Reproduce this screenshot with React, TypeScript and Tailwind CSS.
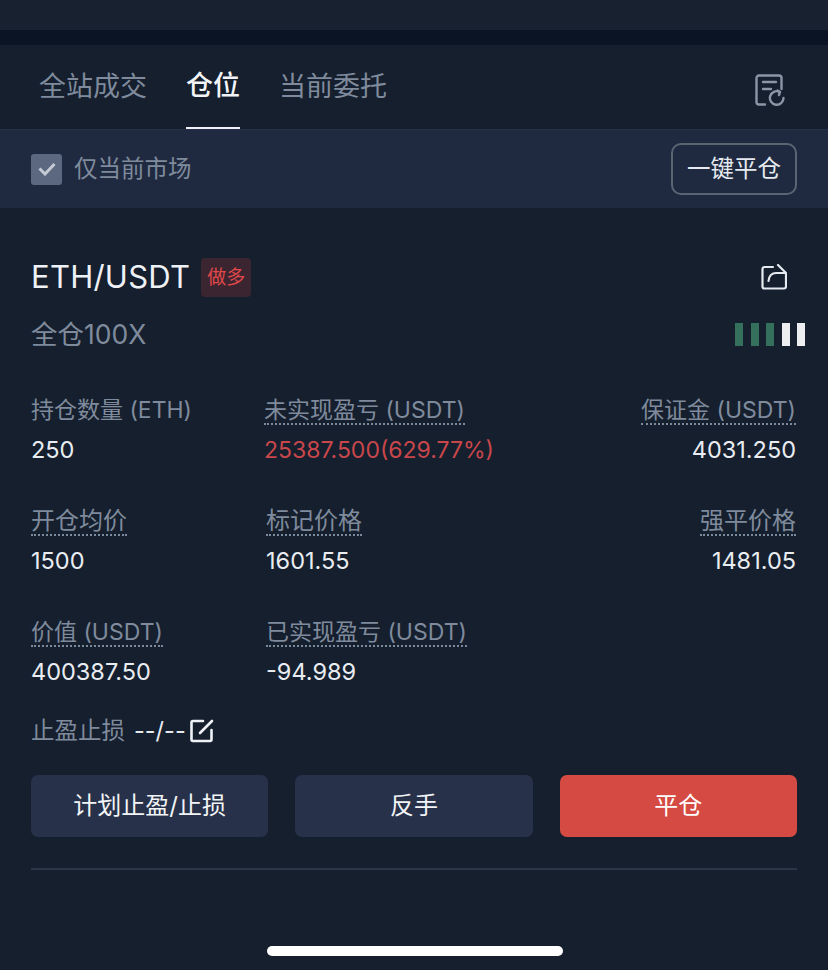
const cellFont = { fontFamily: '"Inter", "Noto Sans CJK SC", sans-serif' }

interface CellProps {
  label: string
  value?: string
  dotted?: boolean
  right?: boolean
  red?: boolean
  cjk?: boolean
}

function Cell({ label, value, dotted = true, right, red, cjk }: CellProps) {
  return (
    <div className={right ? 'flex flex-col items-end' : 'flex flex-col items-start'}>
      <span
        className={
          (dotted ? 'border-b-2 border-dotted border-[#7c8a9d] ' : '') +
          (cjk ? 'text-[24px] ' : 'text-[23px] ') +
          'h-[29px] leading-[28px] text-[#7f8b9c] whitespace-nowrap'
        }
      >
        {label}
      </span>
      <span
        className={
          red
            ? 'mt-[9px] text-[23px] leading-[32px] text-[#c9474b] whitespace-nowrap'
            : 'mt-[9px] text-[23.5px] leading-[32px] text-[#e9edf2] whitespace-nowrap'
        }
      >
        {value}
      </span>
    </div>
  )
}

function HistoryIcon() {
  return (
    <svg width="30" height="32" viewBox="0 0 30 32" fill="none" stroke="#8a96a6" strokeWidth="2.4" strokeLinecap="round" strokeLinejoin="round">
      <path d="M10 30.500H4A2.500 2.500 0 0 1 1.500 28V4A2.500 2.500 0 0 1 4 1.500h20A2.500 2.500 0 0 1 26.500 4v11" />
      <path d="M8 8h13M8 15h8" />
      <path d="M28.500 24a6.800 6.800 0 1 1-4-6.200" />
      <path d="M22.500 16.500l2.500 1.500-1 3" />
    </svg>
  )
}

function ShareIcon() {
  return (
    <svg width="26" height="26" viewBox="0 0 26 26" fill="none" stroke="#e6eaf0" strokeWidth="2.2" strokeLinecap="round" strokeLinejoin="round">
      <path d="M12 3H3.500a2 2 0 0 0-2 2v17.500a2 2 0 0 0 2 2H23a2 2 0 0 0 2-2V10" />
      <path d="M17 1l8 8H15c-4 0-7 3-7.500 8" />
    </svg>
  )
}

function EditIcon() {
  return (
    <svg width="24" height="24" viewBox="0 0 24 24" fill="none" stroke="#eef1f5" strokeWidth="2.600" strokeLinecap="round" strokeLinejoin="round">
      <path d="M13 2H3a1.500 1.500 0 0 0-1.500 1.500v17A1.500 1.500 0 0 0 3 22h17a1.500 1.500 0 0 0 1.500-1.500V11" />
      <path d="M10 14 22 2" />
    </svg>
  )
}

export default function App() {
  return (
    <div className="relative h-[970px] w-[828px] overflow-hidden bg-[#151f2e]" style={cellFont}>
      <div className="h-[30px] bg-[#172130]" />
      <div className="h-[15px] bg-[#0b1424]" />

      {/* tabs */}
      <div className="flex h-[84px] items-stretch pl-[39px] pr-[43px]">
        <div className="flex items-center pt-[1px] text-[27px] text-[#7f8b9c]">全站成交</div>
        <div className="ml-[39px] flex w-[54px] flex-col items-center">
          <div className="flex flex-1 items-center pt-[1px] text-[27px] font-medium text-[#f2f4f7]">仓位</div>
          <div className="h-[2px] w-full bg-[#eef1f6]" />
        </div>
        <div className="ml-[39px] flex items-center pt-[1px] text-[27px] text-[#7f8b9c]">当前委托</div>
        <div className="ml-auto flex items-center pt-[6px]">
          <HistoryIcon />
        </div>
      </div>

      {/* only current market */}
      <div className="flex h-[79px] items-center justify-between border-t border-[#27324a] bg-[#1f2a40] pl-[31px] pr-[31px]">
        <div className="flex items-center gap-[12px]">
          <div className="flex h-[31px] w-[31px] items-center justify-center rounded-[3px] bg-[#5b6880]">
            <svg width="18" height="14" viewBox="0 0 18 14" fill="none" stroke="#c5cbd4" strokeWidth="3">
              <path d="M1.500 6.500 7 12 16.500 2" />
            </svg>
          </div>
          <span className="text-[23.500px] text-[#7f8b9c]">仅当前市场</span>
        </div>
        <button type="button" className="flex h-[52px] w-[126px] items-center justify-center rounded-[10px] border-2 border-[#5b6473] text-[23.500px] text-[#e6eaf0]">
          一键平仓
        </button>
      </div>

      <div className="pl-[31px] pr-[32px]">
        {/* symbol */}
        <div className="mt-[49px] flex h-[40px] items-center justify-between">
          <div className="flex items-center gap-[11px]">
            <span className="text-[31px] leading-[40px] tracking-[0.25px] text-[#eef1f5]">ETH/USDT</span>
            <span className="flex h-[39px] w-[50px] items-center justify-center rounded-[4px] bg-[#3b2530] pt-[2px] text-[19px] text-[#e0484a]">做多</span>
          </div>
          <div className="mr-[9px]">
            <ShareIcon />
          </div>
        </div>
        <div className="mt-[17px] flex h-[40px] items-center justify-between">
          <span className="pt-[2px] text-[26.500px] text-[#7f8b9c]">全仓100X</span>
          <div className="-mr-[9px] flex gap-[7.500px]">
            <div className="h-[23px] w-[8px] bg-[#34705c]" />
            <div className="h-[23px] w-[8px] bg-[#34705c]" />
            <div className="h-[23px] w-[8px] bg-[#34705c]" />
            <div className="h-[23px] w-[8px] bg-[#eceef0]" />
            <div className="h-[23px] w-[8px] bg-[#eceef0]" />
          </div>
        </div>

        {/* position data */}
        <div className="mt-[42px] grid grid-cols-[233px_1fr_auto]">
          <Cell label="持仓数量 (ETH)" value="250" dotted={false} />
          <Cell label="未实现盈亏 (USDT)" value="25387.500(629.77%)" red />
          <Cell label="保证金 (USDT)" value="4031.250" right />
        </div>
        <div className="mt-[41px] grid grid-cols-[235px_1fr_auto]">
          <Cell label="开仓均价" value="1500" cjk />
          <Cell label="标记价格" value="1601.55" cjk />
          <Cell label="强平价格" value="1481.05" right cjk />
        </div>
        <div className="mt-[41px] grid grid-cols-[235px_1fr_auto]">
          <Cell label="价值 (USDT)" value="400387.50" />
          <Cell label="已实现盈亏 (USDT)" value="-94.989" />
        </div>

        {/* tp/sl */}
        <div className="mt-[27px] flex h-[32px] items-center">
          <span className="text-[23.500px] text-[#7f8b9c]">止盈止损</span>
          <span className="ml-[9px] text-[23.500px] text-[#e9edf2]">--/--</span>
          <span className="ml-[4px]">
            <EditIcon />
          </span>
        </div>

        <div className="mt-[28px] -mr-[1px] grid grid-cols-3 gap-[27px]">
          <button type="button" className="h-[62px] rounded-[7px] bg-[#27324a] text-[24px] text-[#f2f4f7]">计划止盈/止损</button>
          <button type="button" className="h-[62px] rounded-[7px] bg-[#27324a] text-[24px] text-[#f2f4f7]">反手</button>
          <button type="button" className="h-[62px] rounded-[7px] bg-[#d54b44] text-[24px] text-white">平仓</button>
        </div>

        <div className="mt-[31px] -mr-[1px] h-[2px] bg-[#2a3548]" />
      </div>

      <div className="absolute bottom-[14px] left-[267px] h-[10px] w-[296px] rounded-full bg-white" />
    </div>
  )
}
